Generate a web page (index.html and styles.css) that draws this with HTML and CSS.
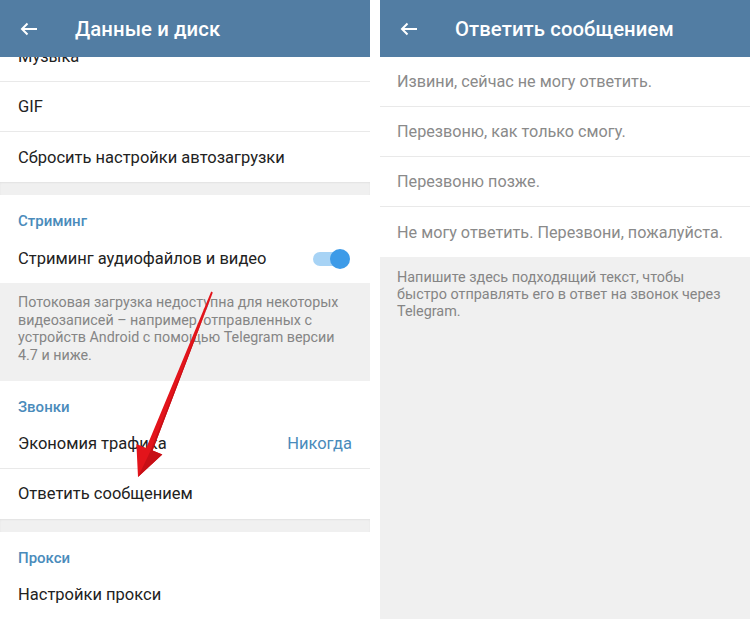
FILE: index.html
```html
<!DOCTYPE html>
<html lang="ru">

<head>
    <title>Данные и диск</title>
    <meta charset="UTF-8" />
    <meta name="viewport" content="width=device-width,initial-scale=1" />
    <link rel="stylesheet" href="styles.css">
</head>

<body>
    <main class="screens">
        <!-- Data and storage settings -->
        <section class="screen">
            <header class="toolbar">
                <svg class="back" viewBox="0 0 18 14" width="18" height="14">
                    <path d="M17 7H2M7.5 1.5L2 7l5.5 5.5" fill="none" stroke="#fff" stroke-width="2" />
                </svg>
                <h1>Данные и диск</h1>
            </header>
            <div class="scroll">
                <div class="scroll-inner">
                    <div class="card">
                        <div class="row divided">Музыка</div>
                        <div class="row divided">GIF</div>
                        <div class="row">Сбросить настройки автозагрузки</div>
                    </div>
                    <div class="gap"></div>
                    <div class="card">
                        <h2 class="section-title">Стриминг</h2>
                        <div class="row">
                            <span>Стриминг аудиофайлов и видео</span>
                            <span class="switch on"></span>
                        </div>
                    </div>
                    <p class="hint">Потоковая загрузка недоступна для некоторых видеозаписей – например, отправленных с устройств Android с помощью Telegram версии 4.7 и ниже.</p>
                    <div class="card">
                        <h2 class="section-title">Звонки</h2>
                        <div class="row divided">
                            <span>Экономия трафика</span>
                            <span class="value">Никогда</span>
                        </div>
                        <div class="row">Ответить сообщением</div>
                    </div>
                    <div class="gap"></div>
                    <div class="card">
                        <h2 class="section-title">Прокси</h2>
                        <div class="row">Настройки прокси</div>
                    </div>
                </div>
            </div>
        </section>

        <!-- Quick replies for calls -->
        <section class="screen grey">
            <header class="toolbar">
                <svg class="back" viewBox="0 0 18 14" width="18" height="14">
                    <path d="M17 7H2M7.5 1.5L2 7l5.5 5.5" fill="none" stroke="#fff" stroke-width="2" />
                </svg>
                <h1>Ответить сообщением</h1>
            </header>
            <div class="card">
                <div class="row reply divided">Извини, сейчас не могу ответить.</div>
                <div class="row reply divided">Перезвоню, как только смогу.</div>
                <div class="row reply divided">Перезвоню позже.</div>
                <div class="row reply">Не могу ответить. Перезвони, пожалуйста.</div>
            </div>
            <p class="hint small">Напишите здесь подходящий текст, чтобы быстро отправлять его в ответ на звонок через Telegram.</p>
        </section>

        <!-- red pointer drawn over the left screen -->
        <svg class="pointer" viewBox="0 0 750 619" width="750" height="619">
            <polygon points="211.2,291.6 212.8,292.4 152.6,450.6 162.3,454.6 138,477 136.4,444 146.2,448" fill="#e3141b" />
            <polygon points="212.8,292.4 152.6,450.6 162.3,454.6 138,477 150,452" fill="#c70f16" />
        </svg>
    </main>
</body>

</html>
```

FILE: styles.css
```css
* {
    box-sizing: border-box;
    margin: 0;
    padding: 0;
}

:root {
    --bar-color: #527da3;
    --title-color: #4a8bbb;
    --text-color: #222;
    --muted-color: #8a8a8a;
    --hint-color: #858585;
    --line-color: #e9e9e9;
    --bg-grey: #f0f0f0;
}

body {
    background: #fff;
    color: var(--text-color);
    font: 16.5px/20px Roboto, "Noto Sans", sans-serif;
    width: 750px;
    height: 619px;
    overflow: hidden;
}

.screens {
    position: relative;
    display: flex;
    gap: 10px;
    height: 619px;
}

.screen {
    width: 370px;
    display: flex;
    flex-direction: column;
    overflow: hidden;
}

.screen.grey {
    background: var(--bg-grey);
}

/* Toolbar */
.toolbar {
    position: relative;
    z-index: 1;
    flex: none;
    height: 57px;
    display: flex;
    align-items: center;
    background: var(--bar-color);
    color: #fff;
    padding-left: 20px;
}

.toolbar .back {
    display: block;
    margin-right: 37px;
}

.toolbar h1 {
    font-size: 20.3px;
    font-weight: 500;
    letter-spacing: 0.1px;
}

/* Lists */
.scroll {
    flex: 1;
    overflow: hidden;
}

.scroll-inner {
    margin-top: -25px;
}

.card {
    background: #fff;
}

.row {
    height: 50px;
    display: flex;
    align-items: center;
    justify-content: space-between;
    padding: 1px 18px 0;
}

.row.divided {
    border-bottom: 1px solid var(--line-color);
}

.row.reply {
    color: var(--muted-color);
    font-size: 16.2px;
    padding-left: 17px;
}

.section-title {
    height: 38px;
    padding: 16px 18px 0;
    font-size: 15px;
    font-weight: 500;
    color: var(--title-color);
}

.value {
    color: var(--title-color);
}

.gap {
    height: 13px;
    background: var(--bg-grey);
    box-shadow: inset 0 1px 2px rgba(0, 0, 0, 0.06);
}

.hint {
    background: var(--bg-grey);
    color: var(--hint-color);
    font-size: 14.3px;
    line-height: 17.7px;
    padding: 11px 26px 16px 18px;
}

.hint.small {
    font-size: 14.4px;
    line-height: 17px;
    padding: 12px 17px;
}

/* Toggle */
.switch {
    position: relative;
    width: 32px;
    height: 14px;
    border-radius: 7px;
    background: #a7d3f5;
    margin-right: 7px;
}

.switch.on::after {
    content: "";
    position: absolute;
    right: -5px;
    top: -3px;
    width: 20px;
    height: 20px;
    border-radius: 50%;
    background: #3d9be8;
}

.pointer {
    position: absolute;
    left: 0;
    top: 0;
    pointer-events: none;
}
```
